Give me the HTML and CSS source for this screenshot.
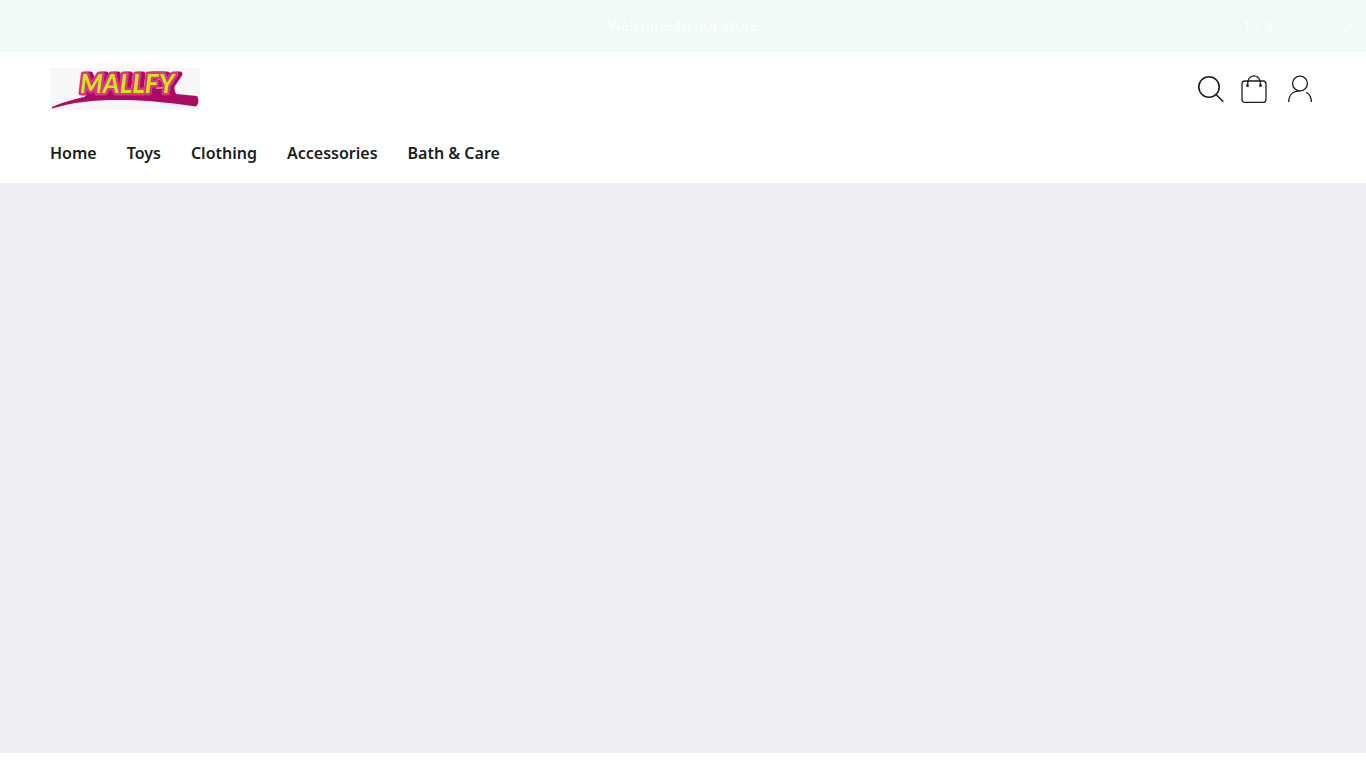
FILE: index.html
```html
<!DOCTYPE html>
<html lang="en">
<head>
  <meta charset="UTF-8">
  <meta name="viewport" content="width=device-width, initial-scale=1">
  <title>Mallfy</title>
  <link rel="stylesheet" href="styles.css">
</head>
<body>
  <div class="announcement">
    <p class="announcement-text">Welcome to our store</p>
    <div class="announcement-controls">
      <button class="announcement-btn" type="button" aria-label="Previous">
        <svg width="8" height="15" viewBox="0 0 8 15"><path d="M7.5 .5L.5 7.5l7 7"/></svg>
      </button>
      <span class="announcement-count">1 / 2</span>
      <button class="announcement-btn" type="button" aria-label="Next">
        <svg width="8" height="15" viewBox="0 0 8 15"><path d="M.5 .5l7 7-7 7"/></svg>
      </button>
      <button class="announcement-btn announcement-close" type="button" aria-label="Close">
        <svg width="13" height="13" viewBox="0 0 13 13"><path d="M.5 .5l12 12M12.5 .5l-12 12"/></svg>
      </button>
    </div>
  </div>

  <header class="header">
    <div class="header-top">
      <a class="logo" href="#" aria-label="Mallfy">
        <svg width="150" height="42" viewBox="0 0 150 42">
          <rect width="150" height="42" fill="#f7f7f7"/>
          <path d="M2 39C14 34 24 31 34 29L44 23 124 20 126 26 147 28C149 31 149 36 146 38.500 121 35 100 32.500 75 32 48 31.500 25 33.500 2 40.500z" fill="#ad0b63"/>
          <text class="logo-word" x="30" y="25">MALLFY</text>
        </svg>
      </a>
      <div class="header-icons">
        <button class="icon-btn" type="button" aria-label="Search">
          <svg width="28" height="28" viewBox="0 0 28 28"><circle cx="13" cy="12" r="10.200" stroke-width="1.600"/><path d="M20 19.500l7.300 7.300" stroke-width="1.600"/></svg>
        </button>
        <a class="icon-btn" href="#" aria-label="Cart">
          <svg width="28" height="28" viewBox="0 0 28 28"><rect x="1" y="6" width="24" height="21.500" rx="3"/><path d="M6.500 10.500C6.500 4 9 .8 13 .8S19.500 4 19.500 10.500"/><circle class="dot" cx="6.500" cy="10.700" r="1.400"/><circle class="dot" cx="19.500" cy="10.700" r="1.400"/></svg>
        </a>
        <a class="icon-btn" href="#" aria-label="Account">
          <svg width="28" height="28" viewBox="0 0 28 28"><circle cx="14" cy="8.500" r="7.400"/><path d="M14 15.900C7 16 2.700 20 2.700 27M20.200 17.300c3.500 2 5.200 5.200 5.200 9.700"/></svg>
        </a>
      </div>
    </div>
    <nav class="nav">
      <a href="#">Home</a>
      <a href="#">Toys</a>
      <a href="#">Clothing</a>
      <a href="#">Accessories</a>
      <a href="#">Bath &amp; Care</a>
    </nav>
  </header>

  <main>
    <section class="slideshow" aria-label="Slideshow"></section>
  </main>
</body>
</html>
```

FILE: styles.css
```css
* {
  box-sizing: border-box;
}

body {
  margin: 0;
  font-family: "Noto Sans", "Open Sans", sans-serif;
  font-size: 16px;
  color: #1c1d1d;
  background: #fff;
}

a {
  color: inherit;
  text-decoration: none;
}

button {
  padding: 0;
  border: 0;
  background: none;
  color: inherit;
  font: inherit;
  cursor: pointer;
}

svg {
  display: block;
}

/* Announcement bar */
.announcement {
  display: grid;
  grid-template-columns: 1fr auto 1fr;
  align-items: center;
  height: 52px;
  padding: 0 10px;
  background: #f0faf7;
  color: #fff;
  font-size: 15px;
}

.announcement-text {
  grid-column: 2;
  margin: 0;
  padding-bottom: 3px;
}

.announcement-controls {
  display: flex;
  align-items: center;
  justify-content: flex-end;
  gap: 12px;
}

.announcement-count {
  padding-bottom: 3px;
}

.announcement-btn svg {
  fill: none;
  stroke: currentColor;
  stroke-width: 1px;
}

.announcement-close {
  margin-left: 38px;
}

/* Header */
.header {
  padding: 16px 50px 17px;
}

.header-top {
  display: flex;
  align-items: center;
  justify-content: space-between;
}

.logo-word {
  font-family: Lato, sans-serif;
  font-size: 26px;
  font-weight: 700;
  font-style: italic;
  fill: #d4e516;
  stroke: #d9368b;
  stroke-width: 5px;
  stroke-linejoin: round;
  paint-order: stroke;
  filter: drop-shadow(4px 0 0 #ad0b63);
}

.header-icons {
  display: flex;
  gap: 17px;
  padding-right: 2px;
}

.icon-btn {
  display: block;
}

.icon-btn svg {
  fill: none;
  stroke: currentColor;
  stroke-width: 1.3px;
}

.icon-btn .dot {
  fill: currentColor;
  stroke: none;
}

.nav {
  display: flex;
  flex-wrap: wrap;
  gap: 30px;
  padding-top: 30px;
  font-weight: 600;
  line-height: 26px;
}

/* Slideshow */
.slideshow {
  height: 570px;
  background: #eeeff5;
}
```
